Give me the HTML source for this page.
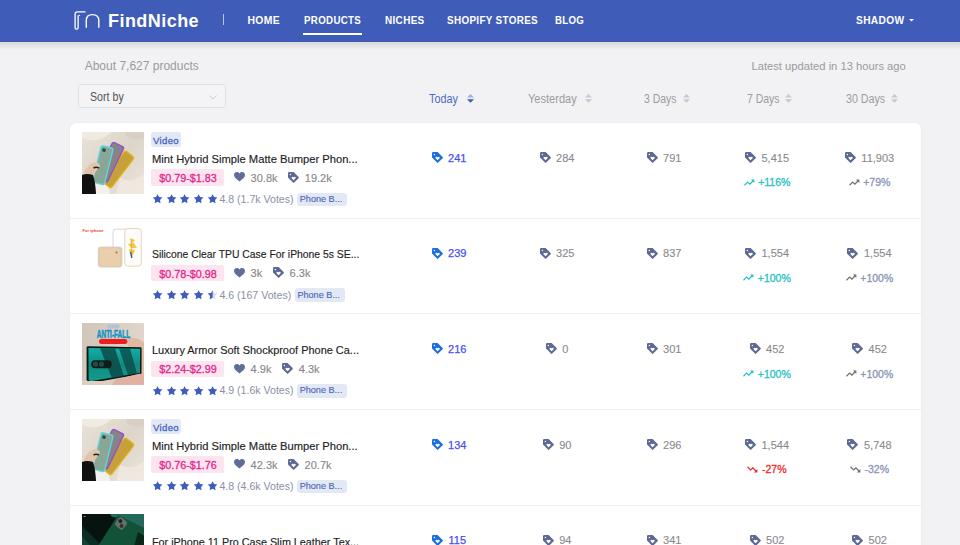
<!DOCTYPE html>
<html><head><meta charset="utf-8"><style>
html,body{margin:0;padding:0;}
body{width:960px;height:545px;overflow:hidden;background:#f2f2f4;position:relative;font-family:"Liberation Sans",sans-serif;}
.t{position:absolute;white-space:nowrap;}
.a{position:absolute;}
svg{position:absolute;overflow:visible;}
</style></head><body>
<div class="a" style="left:0;top:0;width:960px;height:42px;background:#3f5db8;"></div>
<div class="a" style="left:0;top:42px;width:960px;height:8px;background:linear-gradient(#d9d9db,#f2f2f4);"></div>
<svg style="left:74px;top:11px" width="27" height="19" viewBox="0 0 27 19">
<path d="M11.5 0.9 H3.2 Q1.1 0.9 1.1 3.1 V16.8 Q1.1 18.1 2.4 18.1 H2.8 Q4.1 18.1 4.1 16.8 V4.2" fill="none" stroke="#fff" stroke-width="1.3"/>
<circle cx="5.5" cy="4.3" r="0.65" fill="#fff"/>
<path d="M12.3 16.8 V9.5 Q12.3 3.6 18.4 3.6 Q24.8 3.6 24.8 9.5 V16.8" fill="none" stroke="#fff" stroke-width="1.4"/>
</svg>
<div class="t " style="left:108px;top:11.76px;font-size:18px;line-height:18px;color:#fff;font-weight:bold;letter-spacing:0.45px;">FindNiche</div>
<div class="a" style="left:223px;top:14px;width:1px;height:11px;background:#b9c4e6;"></div>
<div class="t " style="left:247.5px;top:15.50px;font-size:10.4px;line-height:10.4px;color:#fff;font-weight:bold;letter-spacing:0.35px;transform:scaleX(1.0);transform-origin:0 0;">HOME</div>
<div class="t " style="left:303.5px;top:15.50px;font-size:10.4px;line-height:10.4px;color:#fff;font-weight:bold;letter-spacing:0.35px;transform:scaleX(0.935);transform-origin:0 0;">PRODUCTS</div>
<div class="t " style="left:384.5px;top:15.50px;font-size:10.4px;line-height:10.4px;color:#fff;font-weight:bold;letter-spacing:0.35px;transform:scaleX(0.957);transform-origin:0 0;">NICHES</div>
<div class="t " style="left:447px;top:15.50px;font-size:10.4px;line-height:10.4px;color:#fff;font-weight:bold;letter-spacing:0.35px;transform:scaleX(0.95);transform-origin:0 0;">SHOPIFY STORES</div>
<div class="t " style="left:554.5px;top:15.50px;font-size:10.4px;line-height:10.4px;color:#fff;font-weight:bold;letter-spacing:0.35px;transform:scaleX(0.93);transform-origin:0 0;">BLOG</div>
<div class="t " style="left:856px;top:15.50px;font-size:10.4px;line-height:10.4px;color:#fff;font-weight:bold;letter-spacing:0.35px;transform:scaleX(0.98);transform-origin:0 0;">SHADOW</div>
<div class="a" style="left:303px;top:33px;width:59px;height:2px;background:#fff;"></div>
<svg style="left:909px;top:19px" width="5" height="3" viewBox="0 0 5 3"><path d="M0 0H5L2.5 2.6Z" fill="#fff"/></svg>
<div class="t " style="left:84.7px;top:60.34px;font-size:12px;line-height:12px;color:#9a9a9e;">About 7,627 products</div>
<div class="t " style="left:751.5px;top:60.72px;font-size:11.2px;line-height:11.2px;color:#9a9a9e;">Latest updated in 13 hours ago</div>
<div class="a" style="left:78px;top:84.3px;width:146px;height:22.2px;border:1px solid #dde1ea;border-radius:3px;background:#f4f4f6;"></div>
<div class="t " style="left:89.5px;top:90.84px;font-size:12px;line-height:12px;color:#555;transform:scaleX(0.887);transform-origin:0 0;">Sort by</div>
<svg style="left:208.7px;top:95.3px" width="8" height="5" viewBox="0 0 8 5"><path d="M0.5 0.5L4 4L7.5 0.5" fill="none" stroke="#c8ccd4" stroke-width="1"/></svg>
<div class="t " style="left:429px;top:92.94px;font-size:12px;line-height:12px;color:#4d6cc6;transform:scaleX(0.9);transform-origin:0 0;">Today</div>
<svg style="left:466.9px;top:94px" width="7" height="9" viewBox="0 0 7 9"><path d="M0 3.6L3.5 0L7 3.6Z" fill="#9fb2e4"/><path d="M0 5.2L3.5 8.8L7 5.2Z" fill="#3a5bc0"/></svg>
<div class="t " style="left:528px;top:92.94px;font-size:12px;line-height:12px;color:#9b9b9f;transform:scaleX(0.92);transform-origin:0 0;">Yesterday</div>
<svg style="left:585px;top:94px" width="7" height="9" viewBox="0 0 7 9"><path d="M0 3.6L3.5 0L7 3.6Z" fill="#c5c9d2"/><path d="M0 5.2L3.5 8.8L7 5.2Z" fill="#c5c9d2"/></svg>
<div class="t " style="left:644px;top:92.94px;font-size:12px;line-height:12px;color:#9b9b9f;transform:scaleX(0.868);transform-origin:0 0;">3 Days</div>
<svg style="left:683.4px;top:94px" width="7" height="9" viewBox="0 0 7 9"><path d="M0 3.6L3.5 0L7 3.6Z" fill="#c5c9d2"/><path d="M0 5.2L3.5 8.8L7 5.2Z" fill="#c5c9d2"/></svg>
<div class="t " style="left:746.6px;top:92.94px;font-size:12px;line-height:12px;color:#9b9b9f;transform:scaleX(0.87);transform-origin:0 0;">7 Days</div>
<svg style="left:785.4px;top:94px" width="7" height="9" viewBox="0 0 7 9"><path d="M0 3.6L3.5 0L7 3.6Z" fill="#c5c9d2"/><path d="M0 5.2L3.5 8.8L7 5.2Z" fill="#c5c9d2"/></svg>
<div class="t " style="left:845.7px;top:92.94px;font-size:12px;line-height:12px;color:#9b9b9f;transform:scaleX(0.89);transform-origin:0 0;">30 Days</div>
<svg style="left:891px;top:94px" width="7" height="9" viewBox="0 0 7 9"><path d="M0 3.6L3.5 0L7 3.6Z" fill="#c5c9d2"/><path d="M0 5.2L3.5 8.8L7 5.2Z" fill="#c5c9d2"/></svg>
<div class="a" style="left:70px;top:122.5px;width:851px;height:450px;background:#fff;border-radius:6px;box-shadow:0 0 2px rgba(0,0,0,0.05);"></div>
<svg style="left:81.5px;top:131.5px" width="62" height="62" viewBox="0 0 62 62">
<defs><linearGradient id="bgc131" x1="0" y1="0" x2="1" y2="1"><stop offset="0" stop-color="#e9e2d8"/><stop offset="0.5" stop-color="#ddd5c9"/><stop offset="1" stop-color="#ebe5dc"/></linearGradient></defs>
<rect width="62" height="62" fill="url(#bgc131)"/>
<path d="M0 6Q14 12 26 3L30 0H0Z" fill="#f0ebe3" opacity="0.9"/>
<path d="M38 46Q50 52 62 42V62H34Z" fill="#efe9e1" opacity="0.9"/>
<path d="M44 4Q54 10 62 6V0H44Z" fill="#d6cdc0" opacity="0.7"/>
<path d="M12 51L26 49L28 62H12Z" fill="#f4f1ec"/>
<g transform="translate(36 37.4) rotate(37.6)"><rect x="-6.5" y="-20" width="13" height="40" rx="2.5" fill="#e4b31c"/><rect x="-5.2" y="-18.7" width="10.4" height="37.4" rx="1.8" fill="#c6a13a"/></g>
<g transform="translate(28 30) rotate(26)"><rect x="-7" y="-20" width="14" height="40" rx="2.5" fill="#9153c8"/><rect x="-5.6" y="-18.6" width="11.2" height="37.2" rx="1.8" fill="#8b8289"/></g>
<g transform="translate(20.8 33.2) rotate(14)"><rect x="-6.8" y="-19.5" width="13.6" height="39" rx="2.5" fill="#5ed6de"/><rect x="-5.4" y="-18.1" width="10.8" height="36.2" rx="1.8" fill="#88a797"/><rect x="-4.2" y="-16.6" width="3.4" height="3.4" rx="1" fill="#2f4a40"/></g>
<path d="M2 40Q7 31 14 30Q18 31 18 34Q15 38 13 41L11 47Q5 48 2 45Z" fill="#e2c3ab"/>
<path d="M11.5 36Q14 34.5 17 36" stroke="#222" stroke-width="1.5" fill="none"/>
<path d="M0 43Q5 41 11 43Q13.5 50 14 62H0Z" fill="#111"/>
</svg>
<div class="a" style="left:151.3px;top:132.00px;width:30.2px;height:15.4px;background:#e3e8f5;border-radius:3px;"></div>
<div class="t " style="left:153.1px;top:136.47px;font-size:9.6px;line-height:9.6px;color:#4a67c0;letter-spacing:0.3px;-webkit-text-stroke:0.3px #4a67c0;">Video</div>
<div class="t " style="left:151.9px;top:153.82px;font-size:11.2px;line-height:11.2px;color:#222;-webkit-text-stroke:0.15px #222;">Mint Hybrid Simple Matte Bumper Phon...</div>
<div class="a" style="left:151.3px;top:169.20px;width:73px;height:16.6px;background:#fde5ef;border-radius:2px;"></div>
<div class="t " style="left:159.2px;top:172.86px;font-size:10.8px;line-height:10.8px;color:#e5268d;-webkit-text-stroke:0.3px #e5268d;">$0.79-$1.83</div>
<svg style="left:234px;top:172.4px" width="11" height="9.5" viewBox="0 0 11 9.5"><path d="M5.5 9.5C4 8.4 0 5.8 0 3.1C0 1.2 1.3 0 3 0C4.2 0 5 0.7 5.5 1.6C6 0.7 6.8 0 8 0C9.7 0 11 1.2 11 3.1C11 5.8 7 8.4 5.5 9.5Z" fill="#616d99"/></svg>
<div class="t " style="left:250.6px;top:172.69px;font-size:11px;line-height:11px;color:#86868a;-webkit-text-stroke:0.12px #86868a;">30.8k</div>
<svg style="left:288.3px;top:171.8px" width="11" height="11" viewBox="0 0 11 11"><path d="M0 1.2Q0 0 1.2 0H5.6L10.6 5Q11.2 5.6 10.6 6.2L6.2 10.6Q5.6 11.2 5 10.6L0 5.6Z" fill="#5d6994"/><circle cx="2.4" cy="2.4" r="0.75" fill="#fff"/><path d="M5.6 8.3L3.8 6.5Q3.1 5.7 3.8 5Q4.6 4.3 5.6 5.2Q6.6 4.3 7.4 5Q8.1 5.7 7.4 6.5Z" fill="#fff"/></svg>
<div class="t " style="left:304.8px;top:172.69px;font-size:11px;line-height:11px;color:#86868a;-webkit-text-stroke:0.12px #86868a;">19.2k</div>
<svg style="left:153.0px;top:194.25px" width="9.2" height="9.5" viewBox="0 0 9.2 9.5"><path d="M4.60 0.15L6.10 3.09L9.36 3.60L7.03 5.94L7.54 9.20L4.60 7.70L1.66 9.20L2.17 5.94L-0.16 3.60L3.10 3.09Z" fill="#3d5cbf"/></svg>
<svg style="left:166.65px;top:194.25px" width="9.2" height="9.5" viewBox="0 0 9.2 9.5"><path d="M4.60 0.15L6.10 3.09L9.36 3.60L7.03 5.94L7.54 9.20L4.60 7.70L1.66 9.20L2.17 5.94L-0.16 3.60L3.10 3.09Z" fill="#3d5cbf"/></svg>
<svg style="left:180.3px;top:194.25px" width="9.2" height="9.5" viewBox="0 0 9.2 9.5"><path d="M4.60 0.15L6.10 3.09L9.36 3.60L7.03 5.94L7.54 9.20L4.60 7.70L1.66 9.20L2.17 5.94L-0.16 3.60L3.10 3.09Z" fill="#3d5cbf"/></svg>
<svg style="left:193.95px;top:194.25px" width="9.2" height="9.5" viewBox="0 0 9.2 9.5"><path d="M4.60 0.15L6.10 3.09L9.36 3.60L7.03 5.94L7.54 9.20L4.60 7.70L1.66 9.20L2.17 5.94L-0.16 3.60L3.10 3.09Z" fill="#3d5cbf"/></svg>
<svg style="left:207.6px;top:194.25px" width="9.2" height="9.5" viewBox="0 0 9.2 9.5"><path d="M4.60 0.15L6.10 3.09L9.36 3.60L7.03 5.94L7.54 9.20L4.60 7.70L1.66 9.20L2.17 5.94L-0.16 3.60L3.10 3.09Z" fill="#3d5cbf"/></svg>
<div class="t " style="left:219.4px;top:193.83px;font-size:10.6px;line-height:10.6px;color:#8b90a6;">4.8 (1.7k Votes)</div>
<div class="a" style="left:297.40px;top:192.60px;width:49.6px;height:13.8px;background:#e3e8f5;border-radius:3px;"></div>
<div class="t " style="left:299.79999999999995px;top:195.10px;font-size:9.1px;line-height:9.1px;color:#4a64b8;-webkit-text-stroke:0.12px #4a64b8;">Phone B...</div>
<div class="a" style="left:389px;top:151.90px;width:120px;height:12px;display:flex;justify-content:center;align-items:flex-start;"><svg style="position:static;flex:none" width="11" height="11" viewBox="0 0 11 11"><path d="M0 1.2Q0 0 1.2 0H5.6L10.6 5Q11.2 5.6 10.6 6.2L6.2 10.6Q5.6 11.2 5 10.6L0 5.6Z" fill="#1b6fe0"/><circle cx="2.4" cy="2.4" r="0.75" fill="#fff"/><path d="M5.6 8.3L3.8 6.5Q3.1 5.7 3.8 5Q4.6 4.3 5.6 5.2Q6.6 4.3 7.4 5Q8.1 5.7 7.4 6.5Z" fill="#fff"/></svg><span style="margin-left:5.5px;font-size:11px;line-height:11px;color:#4a4ff0;position:relative;top:0.8px;-webkit-text-stroke:0.25px #4a4ff0;">241</span></div>
<div class="a" style="left:497px;top:151.90px;width:120px;height:12px;display:flex;justify-content:center;align-items:flex-start;"><svg style="position:static;flex:none" width="11" height="11" viewBox="0 0 11 11"><path d="M0 1.2Q0 0 1.2 0H5.6L10.6 5Q11.2 5.6 10.6 6.2L6.2 10.6Q5.6 11.2 5 10.6L0 5.6Z" fill="#5d6994"/><circle cx="2.4" cy="2.4" r="0.75" fill="#fff"/><path d="M5.6 8.3L3.8 6.5Q3.1 5.7 3.8 5Q4.6 4.3 5.6 5.2Q6.6 4.3 7.4 5Q8.1 5.7 7.4 6.5Z" fill="#fff"/></svg><span style="margin-left:5.5px;font-size:11px;line-height:11px;color:#8a8a8e;position:relative;top:0.8px;-webkit-text-stroke:0.12px #8a8a8e;">284</span></div>
<div class="a" style="left:604px;top:151.90px;width:120px;height:12px;display:flex;justify-content:center;align-items:flex-start;"><svg style="position:static;flex:none" width="11" height="11" viewBox="0 0 11 11"><path d="M0 1.2Q0 0 1.2 0H5.6L10.6 5Q11.2 5.6 10.6 6.2L6.2 10.6Q5.6 11.2 5 10.6L0 5.6Z" fill="#5d6994"/><circle cx="2.4" cy="2.4" r="0.75" fill="#fff"/><path d="M5.6 8.3L3.8 6.5Q3.1 5.7 3.8 5Q4.6 4.3 5.6 5.2Q6.6 4.3 7.4 5Q8.1 5.7 7.4 6.5Z" fill="#fff"/></svg><span style="margin-left:5.5px;font-size:11px;line-height:11px;color:#8a8a8e;position:relative;top:0.8px;-webkit-text-stroke:0.12px #8a8a8e;">791</span></div>
<div class="a" style="left:707px;top:151.90px;width:120px;height:12px;display:flex;justify-content:center;align-items:flex-start;"><svg style="position:static;flex:none" width="11" height="11" viewBox="0 0 11 11"><path d="M0 1.2Q0 0 1.2 0H5.6L10.6 5Q11.2 5.6 10.6 6.2L6.2 10.6Q5.6 11.2 5 10.6L0 5.6Z" fill="#5d6994"/><circle cx="2.4" cy="2.4" r="0.75" fill="#fff"/><path d="M5.6 8.3L3.8 6.5Q3.1 5.7 3.8 5Q4.6 4.3 5.6 5.2Q6.6 4.3 7.4 5Q8.1 5.7 7.4 6.5Z" fill="#fff"/></svg><span style="margin-left:5.5px;font-size:11px;line-height:11px;color:#8a8a8e;position:relative;top:0.8px;-webkit-text-stroke:0.12px #8a8a8e;">5,415</span></div>
<div class="a" style="left:809.5px;top:151.90px;width:120px;height:12px;display:flex;justify-content:center;align-items:flex-start;"><svg style="position:static;flex:none" width="11" height="11" viewBox="0 0 11 11"><path d="M0 1.2Q0 0 1.2 0H5.6L10.6 5Q11.2 5.6 10.6 6.2L6.2 10.6Q5.6 11.2 5 10.6L0 5.6Z" fill="#5d6994"/><circle cx="2.4" cy="2.4" r="0.75" fill="#fff"/><path d="M5.6 8.3L3.8 6.5Q3.1 5.7 3.8 5Q4.6 4.3 5.6 5.2Q6.6 4.3 7.4 5Q8.1 5.7 7.4 6.5Z" fill="#fff"/></svg><span style="margin-left:5.5px;font-size:11px;line-height:11px;color:#8a8a8e;position:relative;top:0.8px;-webkit-text-stroke:0.12px #8a8a8e;">11,903</span></div>
<div class="a" style="left:707px;top:178.80px;width:120px;height:8px;display:flex;justify-content:center;align-items:flex-start;"><svg style="position:static;flex:none" width="11" height="7" viewBox="0 0 11 7"><path d="M0.5 6.2L3.6 3.1L5.9 5.2L9.4 1.5" fill="none" stroke="#26c1c8" stroke-width="1.25"/><path d="M6.9 0.6H10.4V4.1Z" fill="#26c1c8"/></svg><span style="margin-left:3.5px;font-size:10.5px;line-height:10.5px;color:#26c1c8;position:relative;top:-1.5px;-webkit-text-stroke:0.3px #26c1c8;">+116%</span></div>
<div class="a" style="left:809.5px;top:178.80px;width:120px;height:8px;display:flex;justify-content:center;align-items:flex-start;"><svg style="position:static;flex:none" width="11" height="7" viewBox="0 0 11 7"><path d="M0.5 6.2L3.6 3.1L5.9 5.2L9.4 1.5" fill="none" stroke="#707070" stroke-width="1.25"/><path d="M6.9 0.6H10.4V4.1Z" fill="#707070"/></svg><span style="margin-left:3.5px;font-size:10.5px;line-height:10.5px;color:#8a94b8;position:relative;top:-1.5px;-webkit-text-stroke:0.3px #8a94b8;">+79%</span></div>
<div class="a" style="left:70px;top:217.50px;width:851px;height:1px;background:#eef0f5;"></div>
<svg style="left:81.5px;top:227.17000000000002px" width="62" height="62" viewBox="0 0 62 62">
<rect width="62" height="62" fill="#fff"/>
<text x="0.5" y="5" font-size="4.2" font-weight="bold" fill="#f23a2a" font-family="Liberation Sans" textLength="21" lengthAdjust="spacingAndGlyphs">For iphone</text>
<path d="M31 39.5V5Q31 2.2 34 2.2H45" fill="none" stroke="#d4d4d8" stroke-width="0.9"/>
<rect x="42.8" y="1.5" width="16.5" height="37.7" rx="3" fill="#fdfbf7" stroke="#e2d2b8" stroke-width="0.9"/>
<path d="M48 11L53 13L50 17Z M46 17L52 16L55 21L49 21Z M47 22L53 23L51 28L48 27Z" fill="#f1c232" opacity="0.9"/>
<path d="M49 12L50 30" stroke="#e0a820" stroke-width="0.8"/>
<path d="M48.6 25L49.8 31" stroke="#3456a8" stroke-width="1.3"/>
<rect x="16.2" y="19.9" width="23.8" height="20.2" rx="2.5" fill="#e6c9a4" stroke="#cfcfd2" stroke-width="0.8"/>
<rect x="18" y="21.5" width="20" height="17" rx="1.5" fill="#eacfad"/>
<circle cx="34.5" cy="25.4" r="1" fill="#8a7560"/>
</svg>
<div class="t " style="left:151.9px;top:249.49px;font-size:11.2px;line-height:11.2px;color:#222;transform:scaleX(0.927);transform-origin:0 0;-webkit-text-stroke:0.15px #222;">Silicone Clear TPU Case For iPhone 5s SE...</div>
<div class="a" style="left:151.3px;top:264.87px;width:73px;height:16.6px;background:#fde5ef;border-radius:2px;"></div>
<div class="t " style="left:159.2px;top:268.53px;font-size:10.8px;line-height:10.8px;color:#e5268d;-webkit-text-stroke:0.3px #e5268d;">$0.78-$0.98</div>
<svg style="left:234px;top:268.07px" width="11" height="9.5" viewBox="0 0 11 9.5"><path d="M5.5 9.5C4 8.4 0 5.8 0 3.1C0 1.2 1.3 0 3 0C4.2 0 5 0.7 5.5 1.6C6 0.7 6.8 0 8 0C9.7 0 11 1.2 11 3.1C11 5.8 7 8.4 5.5 9.5Z" fill="#616d99"/></svg>
<div class="t " style="left:250.6px;top:268.36px;font-size:11px;line-height:11px;color:#86868a;-webkit-text-stroke:0.12px #86868a;">3k</div>
<svg style="left:273.1px;top:267.47px" width="11" height="11" viewBox="0 0 11 11"><path d="M0 1.2Q0 0 1.2 0H5.6L10.6 5Q11.2 5.6 10.6 6.2L6.2 10.6Q5.6 11.2 5 10.6L0 5.6Z" fill="#5d6994"/><circle cx="2.4" cy="2.4" r="0.75" fill="#fff"/><path d="M5.6 8.3L3.8 6.5Q3.1 5.7 3.8 5Q4.6 4.3 5.6 5.2Q6.6 4.3 7.4 5Q8.1 5.7 7.4 6.5Z" fill="#fff"/></svg>
<div class="t " style="left:289.6px;top:268.36px;font-size:11px;line-height:11px;color:#86868a;-webkit-text-stroke:0.12px #86868a;">6.3k</div>
<svg style="left:153.0px;top:289.92px" width="9.2" height="9.5" viewBox="0 0 9.2 9.5"><path d="M4.60 0.15L6.10 3.09L9.36 3.60L7.03 5.94L7.54 9.20L4.60 7.70L1.66 9.20L2.17 5.94L-0.16 3.60L3.10 3.09Z" fill="#3d5cbf"/></svg>
<svg style="left:166.65px;top:289.92px" width="9.2" height="9.5" viewBox="0 0 9.2 9.5"><path d="M4.60 0.15L6.10 3.09L9.36 3.60L7.03 5.94L7.54 9.20L4.60 7.70L1.66 9.20L2.17 5.94L-0.16 3.60L3.10 3.09Z" fill="#3d5cbf"/></svg>
<svg style="left:180.3px;top:289.92px" width="9.2" height="9.5" viewBox="0 0 9.2 9.5"><path d="M4.60 0.15L6.10 3.09L9.36 3.60L7.03 5.94L7.54 9.20L4.60 7.70L1.66 9.20L2.17 5.94L-0.16 3.60L3.10 3.09Z" fill="#3d5cbf"/></svg>
<svg style="left:193.95px;top:289.92px" width="9.2" height="9.5" viewBox="0 0 9.2 9.5"><path d="M4.60 0.15L6.10 3.09L9.36 3.60L7.03 5.94L7.54 9.20L4.60 7.70L1.66 9.20L2.17 5.94L-0.16 3.60L3.10 3.09Z" fill="#3d5cbf"/></svg>
<svg style="left:207.6px;top:289.92px" width="9.2" height="9.5" viewBox="0 0 9.2 9.5"><path d="M4.60 0.15L6.10 3.09L9.36 3.60L7.03 5.94L7.54 9.20L4.60 7.70L1.66 9.20L2.17 5.94L-0.16 3.60L3.10 3.09Z" fill="#d8ddee"/><path d="M4.60 0.15L4.60 7.70L1.66 9.20L2.17 5.94L-0.16 3.60L3.10 3.09Z" fill="#3d5cbf"/></svg>
<div class="t " style="left:219.4px;top:289.50px;font-size:10.6px;line-height:10.6px;color:#8b90a6;">4.6 (167 Votes)</div>
<div class="a" style="left:295.00px;top:288.27px;width:49.6px;height:13.8px;background:#e3e8f5;border-radius:3px;"></div>
<div class="t " style="left:297.4px;top:290.77px;font-size:9.1px;line-height:9.1px;color:#4a64b8;-webkit-text-stroke:0.12px #4a64b8;">Phone B...</div>
<div class="a" style="left:389px;top:247.57px;width:120px;height:12px;display:flex;justify-content:center;align-items:flex-start;"><svg style="position:static;flex:none" width="11" height="11" viewBox="0 0 11 11"><path d="M0 1.2Q0 0 1.2 0H5.6L10.6 5Q11.2 5.6 10.6 6.2L6.2 10.6Q5.6 11.2 5 10.6L0 5.6Z" fill="#1b6fe0"/><circle cx="2.4" cy="2.4" r="0.75" fill="#fff"/><path d="M5.6 8.3L3.8 6.5Q3.1 5.7 3.8 5Q4.6 4.3 5.6 5.2Q6.6 4.3 7.4 5Q8.1 5.7 7.4 6.5Z" fill="#fff"/></svg><span style="margin-left:5.5px;font-size:11px;line-height:11px;color:#4a4ff0;position:relative;top:0.8px;-webkit-text-stroke:0.25px #4a4ff0;">239</span></div>
<div class="a" style="left:497px;top:247.57px;width:120px;height:12px;display:flex;justify-content:center;align-items:flex-start;"><svg style="position:static;flex:none" width="11" height="11" viewBox="0 0 11 11"><path d="M0 1.2Q0 0 1.2 0H5.6L10.6 5Q11.2 5.6 10.6 6.2L6.2 10.6Q5.6 11.2 5 10.6L0 5.6Z" fill="#5d6994"/><circle cx="2.4" cy="2.4" r="0.75" fill="#fff"/><path d="M5.6 8.3L3.8 6.5Q3.1 5.7 3.8 5Q4.6 4.3 5.6 5.2Q6.6 4.3 7.4 5Q8.1 5.7 7.4 6.5Z" fill="#fff"/></svg><span style="margin-left:5.5px;font-size:11px;line-height:11px;color:#8a8a8e;position:relative;top:0.8px;-webkit-text-stroke:0.12px #8a8a8e;">325</span></div>
<div class="a" style="left:604px;top:247.57px;width:120px;height:12px;display:flex;justify-content:center;align-items:flex-start;"><svg style="position:static;flex:none" width="11" height="11" viewBox="0 0 11 11"><path d="M0 1.2Q0 0 1.2 0H5.6L10.6 5Q11.2 5.6 10.6 6.2L6.2 10.6Q5.6 11.2 5 10.6L0 5.6Z" fill="#5d6994"/><circle cx="2.4" cy="2.4" r="0.75" fill="#fff"/><path d="M5.6 8.3L3.8 6.5Q3.1 5.7 3.8 5Q4.6 4.3 5.6 5.2Q6.6 4.3 7.4 5Q8.1 5.7 7.4 6.5Z" fill="#fff"/></svg><span style="margin-left:5.5px;font-size:11px;line-height:11px;color:#8a8a8e;position:relative;top:0.8px;-webkit-text-stroke:0.12px #8a8a8e;">837</span></div>
<div class="a" style="left:707px;top:247.57px;width:120px;height:12px;display:flex;justify-content:center;align-items:flex-start;"><svg style="position:static;flex:none" width="11" height="11" viewBox="0 0 11 11"><path d="M0 1.2Q0 0 1.2 0H5.6L10.6 5Q11.2 5.6 10.6 6.2L6.2 10.6Q5.6 11.2 5 10.6L0 5.6Z" fill="#5d6994"/><circle cx="2.4" cy="2.4" r="0.75" fill="#fff"/><path d="M5.6 8.3L3.8 6.5Q3.1 5.7 3.8 5Q4.6 4.3 5.6 5.2Q6.6 4.3 7.4 5Q8.1 5.7 7.4 6.5Z" fill="#fff"/></svg><span style="margin-left:5.5px;font-size:11px;line-height:11px;color:#8a8a8e;position:relative;top:0.8px;-webkit-text-stroke:0.12px #8a8a8e;">1,554</span></div>
<div class="a" style="left:809.5px;top:247.57px;width:120px;height:12px;display:flex;justify-content:center;align-items:flex-start;"><svg style="position:static;flex:none" width="11" height="11" viewBox="0 0 11 11"><path d="M0 1.2Q0 0 1.2 0H5.6L10.6 5Q11.2 5.6 10.6 6.2L6.2 10.6Q5.6 11.2 5 10.6L0 5.6Z" fill="#5d6994"/><circle cx="2.4" cy="2.4" r="0.75" fill="#fff"/><path d="M5.6 8.3L3.8 6.5Q3.1 5.7 3.8 5Q4.6 4.3 5.6 5.2Q6.6 4.3 7.4 5Q8.1 5.7 7.4 6.5Z" fill="#fff"/></svg><span style="margin-left:5.5px;font-size:11px;line-height:11px;color:#8a8a8e;position:relative;top:0.8px;-webkit-text-stroke:0.12px #8a8a8e;">1,554</span></div>
<div class="a" style="left:707px;top:274.47px;width:120px;height:8px;display:flex;justify-content:center;align-items:flex-start;"><svg style="position:static;flex:none" width="11" height="7" viewBox="0 0 11 7"><path d="M0.5 6.2L3.6 3.1L5.9 5.2L9.4 1.5" fill="none" stroke="#26c1c8" stroke-width="1.25"/><path d="M6.9 0.6H10.4V4.1Z" fill="#26c1c8"/></svg><span style="margin-left:3.5px;font-size:10.5px;line-height:10.5px;color:#26c1c8;position:relative;top:-1.5px;-webkit-text-stroke:0.3px #26c1c8;">+100%</span></div>
<div class="a" style="left:809.5px;top:274.47px;width:120px;height:8px;display:flex;justify-content:center;align-items:flex-start;"><svg style="position:static;flex:none" width="11" height="7" viewBox="0 0 11 7"><path d="M0.5 6.2L3.6 3.1L5.9 5.2L9.4 1.5" fill="none" stroke="#707070" stroke-width="1.25"/><path d="M6.9 0.6H10.4V4.1Z" fill="#707070"/></svg><span style="margin-left:3.5px;font-size:10.5px;line-height:10.5px;color:#8a94b8;position:relative;top:-1.5px;-webkit-text-stroke:0.3px #8a94b8;">+100%</span></div>
<div class="a" style="left:70px;top:313.17px;width:851px;height:1px;background:#eef0f5;"></div>
<svg style="left:81.5px;top:322.84000000000003px" width="62" height="62" viewBox="0 0 62 62">
<defs><linearGradient id="abg" x1="0" y1="0" x2="1" y2="0"><stop offset="0" stop-color="#d2c5b9"/><stop offset="1" stop-color="#e0d6cc"/></linearGradient>
<linearGradient id="phg" x1="0" y1="0" x2="0" y2="1"><stop offset="0" stop-color="#10b0a8"/><stop offset="0.5" stop-color="#118a80"/><stop offset="1" stop-color="#139c8e"/></linearGradient></defs>
<rect width="62" height="62" fill="url(#abg)"/>
<path d="M44 16Q56 13 62 20V62H56Z" fill="#dfb9a2"/>
<rect x="25" y="1.5" width="12.4" height="4" rx="1.5" fill="#b9c0cf"/>
<text x="14.8" y="14.8" font-size="10.6" font-weight="bold" fill="#1492c2" stroke="#1492c2" stroke-width="0.5" font-family="Liberation Sans" textLength="33.4" lengthAdjust="spacingAndGlyphs">ANTI-FALL</text>
<rect x="17" y="16" width="28.3" height="5" rx="2.5" fill="#ef1d1d"/>
<path d="M4.6 24.5Q4.6 23.2 6 23.2L58.5 24.2Q59.6 24.3 59.6 25.5L59.5 50Q59.5 51 58.5 51.2L8.5 60Q6.6 60.3 6.2 58.5L4.6 57Z" fill="#0d1414"/>
<path d="M6.4 25L58.2 25.8L58 49.8L8.3 58.3L6.6 56.8Z" fill="url(#phg)"/>
<path d="M18 25.3L33 25.4L42 53.2L30 55.2Z" fill="#0a4644" opacity="0.8"/>
<path d="M37 25.5L48 25.6L55 50.5L46 52Z" fill="#0a4644" opacity="0.75"/>
<rect x="9.2" y="37.3" width="20.5" height="7.9" rx="3.9" fill="#0e1c1b"/>
<circle cx="13.5" cy="41.2" r="2.6" fill="#1f4a46"/><circle cx="19.5" cy="41.2" r="2.6" fill="#1f4a46"/>
<path d="M30 62Q32 56 38 55.5L56 51Q62 50 62 56V62Z" fill="#e0b0a2"/>
<rect x="0" y="58" width="30" height="4" fill="#dccfc2"/>
</svg>
<div class="t " style="left:151.9px;top:345.16px;font-size:11.2px;line-height:11.2px;color:#222;transform:scaleX(0.979);transform-origin:0 0;-webkit-text-stroke:0.15px #222;">Luxury Armor Soft Shockproof Phone Ca...</div>
<div class="a" style="left:151.3px;top:360.54px;width:73px;height:16.6px;background:#fde5ef;border-radius:2px;"></div>
<div class="t " style="left:159.2px;top:364.20px;font-size:10.8px;line-height:10.8px;color:#e5268d;-webkit-text-stroke:0.3px #e5268d;">$2.24-$2.99</div>
<svg style="left:234px;top:363.74px" width="11" height="9.5" viewBox="0 0 11 9.5"><path d="M5.5 9.5C4 8.4 0 5.8 0 3.1C0 1.2 1.3 0 3 0C4.2 0 5 0.7 5.5 1.6C6 0.7 6.8 0 8 0C9.7 0 11 1.2 11 3.1C11 5.8 7 8.4 5.5 9.5Z" fill="#616d99"/></svg>
<div class="t " style="left:250.6px;top:364.03px;font-size:11px;line-height:11px;color:#86868a;-webkit-text-stroke:0.12px #86868a;">4.9k</div>
<svg style="left:282.3px;top:363.14px" width="11" height="11" viewBox="0 0 11 11"><path d="M0 1.2Q0 0 1.2 0H5.6L10.6 5Q11.2 5.6 10.6 6.2L6.2 10.6Q5.6 11.2 5 10.6L0 5.6Z" fill="#5d6994"/><circle cx="2.4" cy="2.4" r="0.75" fill="#fff"/><path d="M5.6 8.3L3.8 6.5Q3.1 5.7 3.8 5Q4.6 4.3 5.6 5.2Q6.6 4.3 7.4 5Q8.1 5.7 7.4 6.5Z" fill="#fff"/></svg>
<div class="t " style="left:298.8px;top:364.03px;font-size:11px;line-height:11px;color:#86868a;-webkit-text-stroke:0.12px #86868a;">4.3k</div>
<svg style="left:153.0px;top:385.59000000000003px" width="9.2" height="9.5" viewBox="0 0 9.2 9.5"><path d="M4.60 0.15L6.10 3.09L9.36 3.60L7.03 5.94L7.54 9.20L4.60 7.70L1.66 9.20L2.17 5.94L-0.16 3.60L3.10 3.09Z" fill="#3d5cbf"/></svg>
<svg style="left:166.65px;top:385.59000000000003px" width="9.2" height="9.5" viewBox="0 0 9.2 9.5"><path d="M4.60 0.15L6.10 3.09L9.36 3.60L7.03 5.94L7.54 9.20L4.60 7.70L1.66 9.20L2.17 5.94L-0.16 3.60L3.10 3.09Z" fill="#3d5cbf"/></svg>
<svg style="left:180.3px;top:385.59000000000003px" width="9.2" height="9.5" viewBox="0 0 9.2 9.5"><path d="M4.60 0.15L6.10 3.09L9.36 3.60L7.03 5.94L7.54 9.20L4.60 7.70L1.66 9.20L2.17 5.94L-0.16 3.60L3.10 3.09Z" fill="#3d5cbf"/></svg>
<svg style="left:193.95px;top:385.59000000000003px" width="9.2" height="9.5" viewBox="0 0 9.2 9.5"><path d="M4.60 0.15L6.10 3.09L9.36 3.60L7.03 5.94L7.54 9.20L4.60 7.70L1.66 9.20L2.17 5.94L-0.16 3.60L3.10 3.09Z" fill="#3d5cbf"/></svg>
<svg style="left:207.6px;top:385.59000000000003px" width="9.2" height="9.5" viewBox="0 0 9.2 9.5"><path d="M4.60 0.15L6.10 3.09L9.36 3.60L7.03 5.94L7.54 9.20L4.60 7.70L1.66 9.20L2.17 5.94L-0.16 3.60L3.10 3.09Z" fill="#3d5cbf"/></svg>
<div class="t " style="left:219.4px;top:385.17px;font-size:10.6px;line-height:10.6px;color:#8b90a6;">4.9 (1.6k Votes)</div>
<div class="a" style="left:297.30px;top:383.94px;width:49.6px;height:13.8px;background:#e3e8f5;border-radius:3px;"></div>
<div class="t " style="left:299.7px;top:386.44px;font-size:9.1px;line-height:9.1px;color:#4a64b8;-webkit-text-stroke:0.12px #4a64b8;">Phone B...</div>
<div class="a" style="left:389px;top:343.24px;width:120px;height:12px;display:flex;justify-content:center;align-items:flex-start;"><svg style="position:static;flex:none" width="11" height="11" viewBox="0 0 11 11"><path d="M0 1.2Q0 0 1.2 0H5.6L10.6 5Q11.2 5.6 10.6 6.2L6.2 10.6Q5.6 11.2 5 10.6L0 5.6Z" fill="#1b6fe0"/><circle cx="2.4" cy="2.4" r="0.75" fill="#fff"/><path d="M5.6 8.3L3.8 6.5Q3.1 5.7 3.8 5Q4.6 4.3 5.6 5.2Q6.6 4.3 7.4 5Q8.1 5.7 7.4 6.5Z" fill="#fff"/></svg><span style="margin-left:5.5px;font-size:11px;line-height:11px;color:#4a4ff0;position:relative;top:0.8px;-webkit-text-stroke:0.25px #4a4ff0;">216</span></div>
<div class="a" style="left:497px;top:343.24px;width:120px;height:12px;display:flex;justify-content:center;align-items:flex-start;"><svg style="position:static;flex:none" width="11" height="11" viewBox="0 0 11 11"><path d="M0 1.2Q0 0 1.2 0H5.6L10.6 5Q11.2 5.6 10.6 6.2L6.2 10.6Q5.6 11.2 5 10.6L0 5.6Z" fill="#5d6994"/><circle cx="2.4" cy="2.4" r="0.75" fill="#fff"/><path d="M5.6 8.3L3.8 6.5Q3.1 5.7 3.8 5Q4.6 4.3 5.6 5.2Q6.6 4.3 7.4 5Q8.1 5.7 7.4 6.5Z" fill="#fff"/></svg><span style="margin-left:5.5px;font-size:11px;line-height:11px;color:#8a8a8e;position:relative;top:0.8px;-webkit-text-stroke:0.12px #8a8a8e;">0</span></div>
<div class="a" style="left:604px;top:343.24px;width:120px;height:12px;display:flex;justify-content:center;align-items:flex-start;"><svg style="position:static;flex:none" width="11" height="11" viewBox="0 0 11 11"><path d="M0 1.2Q0 0 1.2 0H5.6L10.6 5Q11.2 5.6 10.6 6.2L6.2 10.6Q5.6 11.2 5 10.6L0 5.6Z" fill="#5d6994"/><circle cx="2.4" cy="2.4" r="0.75" fill="#fff"/><path d="M5.6 8.3L3.8 6.5Q3.1 5.7 3.8 5Q4.6 4.3 5.6 5.2Q6.6 4.3 7.4 5Q8.1 5.7 7.4 6.5Z" fill="#fff"/></svg><span style="margin-left:5.5px;font-size:11px;line-height:11px;color:#8a8a8e;position:relative;top:0.8px;-webkit-text-stroke:0.12px #8a8a8e;">301</span></div>
<div class="a" style="left:707px;top:343.24px;width:120px;height:12px;display:flex;justify-content:center;align-items:flex-start;"><svg style="position:static;flex:none" width="11" height="11" viewBox="0 0 11 11"><path d="M0 1.2Q0 0 1.2 0H5.6L10.6 5Q11.2 5.6 10.6 6.2L6.2 10.6Q5.6 11.2 5 10.6L0 5.6Z" fill="#5d6994"/><circle cx="2.4" cy="2.4" r="0.75" fill="#fff"/><path d="M5.6 8.3L3.8 6.5Q3.1 5.7 3.8 5Q4.6 4.3 5.6 5.2Q6.6 4.3 7.4 5Q8.1 5.7 7.4 6.5Z" fill="#fff"/></svg><span style="margin-left:5.5px;font-size:11px;line-height:11px;color:#8a8a8e;position:relative;top:0.8px;-webkit-text-stroke:0.12px #8a8a8e;">452</span></div>
<div class="a" style="left:809.5px;top:343.24px;width:120px;height:12px;display:flex;justify-content:center;align-items:flex-start;"><svg style="position:static;flex:none" width="11" height="11" viewBox="0 0 11 11"><path d="M0 1.2Q0 0 1.2 0H5.6L10.6 5Q11.2 5.6 10.6 6.2L6.2 10.6Q5.6 11.2 5 10.6L0 5.6Z" fill="#5d6994"/><circle cx="2.4" cy="2.4" r="0.75" fill="#fff"/><path d="M5.6 8.3L3.8 6.5Q3.1 5.7 3.8 5Q4.6 4.3 5.6 5.2Q6.6 4.3 7.4 5Q8.1 5.7 7.4 6.5Z" fill="#fff"/></svg><span style="margin-left:5.5px;font-size:11px;line-height:11px;color:#8a8a8e;position:relative;top:0.8px;-webkit-text-stroke:0.12px #8a8a8e;">452</span></div>
<div class="a" style="left:707px;top:370.14px;width:120px;height:8px;display:flex;justify-content:center;align-items:flex-start;"><svg style="position:static;flex:none" width="11" height="7" viewBox="0 0 11 7"><path d="M0.5 6.2L3.6 3.1L5.9 5.2L9.4 1.5" fill="none" stroke="#26c1c8" stroke-width="1.25"/><path d="M6.9 0.6H10.4V4.1Z" fill="#26c1c8"/></svg><span style="margin-left:3.5px;font-size:10.5px;line-height:10.5px;color:#26c1c8;position:relative;top:-1.5px;-webkit-text-stroke:0.3px #26c1c8;">+100%</span></div>
<div class="a" style="left:809.5px;top:370.14px;width:120px;height:8px;display:flex;justify-content:center;align-items:flex-start;"><svg style="position:static;flex:none" width="11" height="7" viewBox="0 0 11 7"><path d="M0.5 6.2L3.6 3.1L5.9 5.2L9.4 1.5" fill="none" stroke="#707070" stroke-width="1.25"/><path d="M6.9 0.6H10.4V4.1Z" fill="#707070"/></svg><span style="margin-left:3.5px;font-size:10.5px;line-height:10.5px;color:#8a94b8;position:relative;top:-1.5px;-webkit-text-stroke:0.3px #8a94b8;">+100%</span></div>
<div class="a" style="left:70px;top:408.84px;width:851px;height:1px;background:#eef0f5;"></div>
<svg style="left:81.5px;top:418.51px" width="62" height="62" viewBox="0 0 62 62">
<defs><linearGradient id="bgc418" x1="0" y1="0" x2="1" y2="1"><stop offset="0" stop-color="#e9e2d8"/><stop offset="0.5" stop-color="#ddd5c9"/><stop offset="1" stop-color="#ebe5dc"/></linearGradient></defs>
<rect width="62" height="62" fill="url(#bgc418)"/>
<path d="M0 6Q14 12 26 3L30 0H0Z" fill="#f0ebe3" opacity="0.9"/>
<path d="M38 46Q50 52 62 42V62H34Z" fill="#efe9e1" opacity="0.9"/>
<path d="M44 4Q54 10 62 6V0H44Z" fill="#d6cdc0" opacity="0.7"/>
<path d="M12 51L26 49L28 62H12Z" fill="#f4f1ec"/>
<g transform="translate(36 37.4) rotate(37.6)"><rect x="-6.5" y="-20" width="13" height="40" rx="2.5" fill="#e4b31c"/><rect x="-5.2" y="-18.7" width="10.4" height="37.4" rx="1.8" fill="#c6a13a"/></g>
<g transform="translate(28 30) rotate(26)"><rect x="-7" y="-20" width="14" height="40" rx="2.5" fill="#9153c8"/><rect x="-5.6" y="-18.6" width="11.2" height="37.2" rx="1.8" fill="#8b8289"/></g>
<g transform="translate(20.8 33.2) rotate(14)"><rect x="-6.8" y="-19.5" width="13.6" height="39" rx="2.5" fill="#5ed6de"/><rect x="-5.4" y="-18.1" width="10.8" height="36.2" rx="1.8" fill="#88a797"/><rect x="-4.2" y="-16.6" width="3.4" height="3.4" rx="1" fill="#2f4a40"/></g>
<path d="M2 40Q7 31 14 30Q18 31 18 34Q15 38 13 41L11 47Q5 48 2 45Z" fill="#e2c3ab"/>
<path d="M11.5 36Q14 34.5 17 36" stroke="#222" stroke-width="1.5" fill="none"/>
<path d="M0 43Q5 41 11 43Q13.5 50 14 62H0Z" fill="#111"/>
</svg>
<div class="a" style="left:151.3px;top:419.01px;width:30.2px;height:15.4px;background:#e3e8f5;border-radius:3px;"></div>
<div class="t " style="left:153.1px;top:423.48px;font-size:9.6px;line-height:9.6px;color:#4a67c0;letter-spacing:0.3px;-webkit-text-stroke:0.3px #4a67c0;">Video</div>
<div class="t " style="left:151.9px;top:440.83px;font-size:11.2px;line-height:11.2px;color:#222;-webkit-text-stroke:0.15px #222;">Mint Hybrid Simple Matte Bumper Phon...</div>
<div class="a" style="left:151.3px;top:456.21px;width:73px;height:16.6px;background:#fde5ef;border-radius:2px;"></div>
<div class="t " style="left:159.2px;top:459.87px;font-size:10.8px;line-height:10.8px;color:#e5268d;-webkit-text-stroke:0.3px #e5268d;">$0.76-$1.76</div>
<svg style="left:234px;top:459.40999999999997px" width="11" height="9.5" viewBox="0 0 11 9.5"><path d="M5.5 9.5C4 8.4 0 5.8 0 3.1C0 1.2 1.3 0 3 0C4.2 0 5 0.7 5.5 1.6C6 0.7 6.8 0 8 0C9.7 0 11 1.2 11 3.1C11 5.8 7 8.4 5.5 9.5Z" fill="#616d99"/></svg>
<div class="t " style="left:250.6px;top:459.70px;font-size:11px;line-height:11px;color:#86868a;-webkit-text-stroke:0.12px #86868a;">42.3k</div>
<svg style="left:288.1px;top:458.81px" width="11" height="11" viewBox="0 0 11 11"><path d="M0 1.2Q0 0 1.2 0H5.6L10.6 5Q11.2 5.6 10.6 6.2L6.2 10.6Q5.6 11.2 5 10.6L0 5.6Z" fill="#5d6994"/><circle cx="2.4" cy="2.4" r="0.75" fill="#fff"/><path d="M5.6 8.3L3.8 6.5Q3.1 5.7 3.8 5Q4.6 4.3 5.6 5.2Q6.6 4.3 7.4 5Q8.1 5.7 7.4 6.5Z" fill="#fff"/></svg>
<div class="t " style="left:304.6px;top:459.70px;font-size:11px;line-height:11px;color:#86868a;-webkit-text-stroke:0.12px #86868a;">20.7k</div>
<svg style="left:153.0px;top:481.26px" width="9.2" height="9.5" viewBox="0 0 9.2 9.5"><path d="M4.60 0.15L6.10 3.09L9.36 3.60L7.03 5.94L7.54 9.20L4.60 7.70L1.66 9.20L2.17 5.94L-0.16 3.60L3.10 3.09Z" fill="#3d5cbf"/></svg>
<svg style="left:166.65px;top:481.26px" width="9.2" height="9.5" viewBox="0 0 9.2 9.5"><path d="M4.60 0.15L6.10 3.09L9.36 3.60L7.03 5.94L7.54 9.20L4.60 7.70L1.66 9.20L2.17 5.94L-0.16 3.60L3.10 3.09Z" fill="#3d5cbf"/></svg>
<svg style="left:180.3px;top:481.26px" width="9.2" height="9.5" viewBox="0 0 9.2 9.5"><path d="M4.60 0.15L6.10 3.09L9.36 3.60L7.03 5.94L7.54 9.20L4.60 7.70L1.66 9.20L2.17 5.94L-0.16 3.60L3.10 3.09Z" fill="#3d5cbf"/></svg>
<svg style="left:193.95px;top:481.26px" width="9.2" height="9.5" viewBox="0 0 9.2 9.5"><path d="M4.60 0.15L6.10 3.09L9.36 3.60L7.03 5.94L7.54 9.20L4.60 7.70L1.66 9.20L2.17 5.94L-0.16 3.60L3.10 3.09Z" fill="#3d5cbf"/></svg>
<svg style="left:207.6px;top:481.26px" width="9.2" height="9.5" viewBox="0 0 9.2 9.5"><path d="M4.60 0.15L6.10 3.09L9.36 3.60L7.03 5.94L7.54 9.20L4.60 7.70L1.66 9.20L2.17 5.94L-0.16 3.60L3.10 3.09Z" fill="#3d5cbf"/></svg>
<div class="t " style="left:219.4px;top:480.84px;font-size:10.6px;line-height:10.6px;color:#8b90a6;">4.8 (4.6k Votes)</div>
<div class="a" style="left:297.30px;top:479.61px;width:49.6px;height:13.8px;background:#e3e8f5;border-radius:3px;"></div>
<div class="t " style="left:299.7px;top:482.11px;font-size:9.1px;line-height:9.1px;color:#4a64b8;-webkit-text-stroke:0.12px #4a64b8;">Phone B...</div>
<div class="a" style="left:389px;top:438.91px;width:120px;height:12px;display:flex;justify-content:center;align-items:flex-start;"><svg style="position:static;flex:none" width="11" height="11" viewBox="0 0 11 11"><path d="M0 1.2Q0 0 1.2 0H5.6L10.6 5Q11.2 5.6 10.6 6.2L6.2 10.6Q5.6 11.2 5 10.6L0 5.6Z" fill="#1b6fe0"/><circle cx="2.4" cy="2.4" r="0.75" fill="#fff"/><path d="M5.6 8.3L3.8 6.5Q3.1 5.7 3.8 5Q4.6 4.3 5.6 5.2Q6.6 4.3 7.4 5Q8.1 5.7 7.4 6.5Z" fill="#fff"/></svg><span style="margin-left:5.5px;font-size:11px;line-height:11px;color:#4a4ff0;position:relative;top:0.8px;-webkit-text-stroke:0.25px #4a4ff0;">134</span></div>
<div class="a" style="left:497px;top:438.91px;width:120px;height:12px;display:flex;justify-content:center;align-items:flex-start;"><svg style="position:static;flex:none" width="11" height="11" viewBox="0 0 11 11"><path d="M0 1.2Q0 0 1.2 0H5.6L10.6 5Q11.2 5.6 10.6 6.2L6.2 10.6Q5.6 11.2 5 10.6L0 5.6Z" fill="#5d6994"/><circle cx="2.4" cy="2.4" r="0.75" fill="#fff"/><path d="M5.6 8.3L3.8 6.5Q3.1 5.7 3.8 5Q4.6 4.3 5.6 5.2Q6.6 4.3 7.4 5Q8.1 5.7 7.4 6.5Z" fill="#fff"/></svg><span style="margin-left:5.5px;font-size:11px;line-height:11px;color:#8a8a8e;position:relative;top:0.8px;-webkit-text-stroke:0.12px #8a8a8e;">90</span></div>
<div class="a" style="left:604px;top:438.91px;width:120px;height:12px;display:flex;justify-content:center;align-items:flex-start;"><svg style="position:static;flex:none" width="11" height="11" viewBox="0 0 11 11"><path d="M0 1.2Q0 0 1.2 0H5.6L10.6 5Q11.2 5.6 10.6 6.2L6.2 10.6Q5.6 11.2 5 10.6L0 5.6Z" fill="#5d6994"/><circle cx="2.4" cy="2.4" r="0.75" fill="#fff"/><path d="M5.6 8.3L3.8 6.5Q3.1 5.7 3.8 5Q4.6 4.3 5.6 5.2Q6.6 4.3 7.4 5Q8.1 5.7 7.4 6.5Z" fill="#fff"/></svg><span style="margin-left:5.5px;font-size:11px;line-height:11px;color:#8a8a8e;position:relative;top:0.8px;-webkit-text-stroke:0.12px #8a8a8e;">296</span></div>
<div class="a" style="left:707px;top:438.91px;width:120px;height:12px;display:flex;justify-content:center;align-items:flex-start;"><svg style="position:static;flex:none" width="11" height="11" viewBox="0 0 11 11"><path d="M0 1.2Q0 0 1.2 0H5.6L10.6 5Q11.2 5.6 10.6 6.2L6.2 10.6Q5.6 11.2 5 10.6L0 5.6Z" fill="#5d6994"/><circle cx="2.4" cy="2.4" r="0.75" fill="#fff"/><path d="M5.6 8.3L3.8 6.5Q3.1 5.7 3.8 5Q4.6 4.3 5.6 5.2Q6.6 4.3 7.4 5Q8.1 5.7 7.4 6.5Z" fill="#fff"/></svg><span style="margin-left:5.5px;font-size:11px;line-height:11px;color:#8a8a8e;position:relative;top:0.8px;-webkit-text-stroke:0.12px #8a8a8e;">1,544</span></div>
<div class="a" style="left:809.5px;top:438.91px;width:120px;height:12px;display:flex;justify-content:center;align-items:flex-start;"><svg style="position:static;flex:none" width="11" height="11" viewBox="0 0 11 11"><path d="M0 1.2Q0 0 1.2 0H5.6L10.6 5Q11.2 5.6 10.6 6.2L6.2 10.6Q5.6 11.2 5 10.6L0 5.6Z" fill="#5d6994"/><circle cx="2.4" cy="2.4" r="0.75" fill="#fff"/><path d="M5.6 8.3L3.8 6.5Q3.1 5.7 3.8 5Q4.6 4.3 5.6 5.2Q6.6 4.3 7.4 5Q8.1 5.7 7.4 6.5Z" fill="#fff"/></svg><span style="margin-left:5.5px;font-size:11px;line-height:11px;color:#8a8a8e;position:relative;top:0.8px;-webkit-text-stroke:0.12px #8a8a8e;">5,748</span></div>
<div class="a" style="left:707px;top:465.81px;width:120px;height:8px;display:flex;justify-content:center;align-items:flex-start;"><svg style="position:static;flex:none" width="11" height="7" viewBox="0 0 11 7"><path d="M0.5 0.8L3.6 3.9L5.9 1.8L9.4 5.5" fill="none" stroke="#f02828" stroke-width="1.25"/><path d="M6.9 6.4H10.4V2.9Z" fill="#f02828"/></svg><span style="margin-left:3.5px;font-size:10.5px;line-height:10.5px;color:#f02828;position:relative;top:-1.5px;-webkit-text-stroke:0.3px #f02828;">-27%</span></div>
<div class="a" style="left:809.5px;top:465.81px;width:120px;height:8px;display:flex;justify-content:center;align-items:flex-start;"><svg style="position:static;flex:none" width="11" height="7" viewBox="0 0 11 7"><path d="M0.5 0.8L3.6 3.9L5.9 1.8L9.4 5.5" fill="none" stroke="#707070" stroke-width="1.25"/><path d="M6.9 6.4H10.4V2.9Z" fill="#707070"/></svg><span style="margin-left:3.5px;font-size:10.5px;line-height:10.5px;color:#8a94b8;position:relative;top:-1.5px;-webkit-text-stroke:0.3px #8a94b8;">-32%</span></div>
<div class="a" style="left:70px;top:504.51px;width:851px;height:1px;background:#eef0f5;"></div>
<svg style="left:81.5px;top:514.1800000000001px" width="62" height="62" viewBox="0 0 62 62">
<rect width="62" height="62" fill="#06130f"/>
<path d="M0 12L22 34L14 40H0Z" fill="#0b2e24"/>
<path d="M0 22L12 36L0 36Z" fill="#124436"/>
<path d="M28 0H62V16L52 10Q40 4 30 3Z" fill="#25685a"/>
<path d="M36 1L62 14V30L54 40H12L16 32Z" fill="#125238"/>
<path d="M56 18L62 22V40H50Z" fill="#0a2418"/>
<g transform="translate(39 9.5) rotate(40)"><rect x="-5" y="-5" width="10" height="10" rx="2.5" fill="#66706a"/><circle cx="-2" cy="-1.5" r="2" fill="#222"/><circle cx="2" cy="1.5" r="2" fill="#333"/></g>
<rect x="1.5" y="2" width="2" height="1" fill="#c88030"/>
</svg>
<div class="t " style="left:151.9px;top:536.50px;font-size:11.2px;line-height:11.2px;color:#222;transform:scaleX(0.964);transform-origin:0 0;-webkit-text-stroke:0.15px #222;">For iPhone 11 Pro Case Slim Leather Tex...</div>
<div class="a" style="left:389px;top:534.58px;width:120px;height:12px;display:flex;justify-content:center;align-items:flex-start;"><svg style="position:static;flex:none" width="11" height="11" viewBox="0 0 11 11"><path d="M0 1.2Q0 0 1.2 0H5.6L10.6 5Q11.2 5.6 10.6 6.2L6.2 10.6Q5.6 11.2 5 10.6L0 5.6Z" fill="#1b6fe0"/><circle cx="2.4" cy="2.4" r="0.75" fill="#fff"/><path d="M5.6 8.3L3.8 6.5Q3.1 5.7 3.8 5Q4.6 4.3 5.6 5.2Q6.6 4.3 7.4 5Q8.1 5.7 7.4 6.5Z" fill="#fff"/></svg><span style="margin-left:5.5px;font-size:11px;line-height:11px;color:#4a4ff0;position:relative;top:0.8px;-webkit-text-stroke:0.25px #4a4ff0;">115</span></div>
<div class="a" style="left:497px;top:534.58px;width:120px;height:12px;display:flex;justify-content:center;align-items:flex-start;"><svg style="position:static;flex:none" width="11" height="11" viewBox="0 0 11 11"><path d="M0 1.2Q0 0 1.2 0H5.6L10.6 5Q11.2 5.6 10.6 6.2L6.2 10.6Q5.6 11.2 5 10.6L0 5.6Z" fill="#5d6994"/><circle cx="2.4" cy="2.4" r="0.75" fill="#fff"/><path d="M5.6 8.3L3.8 6.5Q3.1 5.7 3.8 5Q4.6 4.3 5.6 5.2Q6.6 4.3 7.4 5Q8.1 5.7 7.4 6.5Z" fill="#fff"/></svg><span style="margin-left:5.5px;font-size:11px;line-height:11px;color:#8a8a8e;position:relative;top:0.8px;-webkit-text-stroke:0.12px #8a8a8e;">94</span></div>
<div class="a" style="left:604px;top:534.58px;width:120px;height:12px;display:flex;justify-content:center;align-items:flex-start;"><svg style="position:static;flex:none" width="11" height="11" viewBox="0 0 11 11"><path d="M0 1.2Q0 0 1.2 0H5.6L10.6 5Q11.2 5.6 10.6 6.2L6.2 10.6Q5.6 11.2 5 10.6L0 5.6Z" fill="#5d6994"/><circle cx="2.4" cy="2.4" r="0.75" fill="#fff"/><path d="M5.6 8.3L3.8 6.5Q3.1 5.7 3.8 5Q4.6 4.3 5.6 5.2Q6.6 4.3 7.4 5Q8.1 5.7 7.4 6.5Z" fill="#fff"/></svg><span style="margin-left:5.5px;font-size:11px;line-height:11px;color:#8a8a8e;position:relative;top:0.8px;-webkit-text-stroke:0.12px #8a8a8e;">341</span></div>
<div class="a" style="left:707px;top:534.58px;width:120px;height:12px;display:flex;justify-content:center;align-items:flex-start;"><svg style="position:static;flex:none" width="11" height="11" viewBox="0 0 11 11"><path d="M0 1.2Q0 0 1.2 0H5.6L10.6 5Q11.2 5.6 10.6 6.2L6.2 10.6Q5.6 11.2 5 10.6L0 5.6Z" fill="#5d6994"/><circle cx="2.4" cy="2.4" r="0.75" fill="#fff"/><path d="M5.6 8.3L3.8 6.5Q3.1 5.7 3.8 5Q4.6 4.3 5.6 5.2Q6.6 4.3 7.4 5Q8.1 5.7 7.4 6.5Z" fill="#fff"/></svg><span style="margin-left:5.5px;font-size:11px;line-height:11px;color:#8a8a8e;position:relative;top:0.8px;-webkit-text-stroke:0.12px #8a8a8e;">502</span></div>
<div class="a" style="left:809.5px;top:534.58px;width:120px;height:12px;display:flex;justify-content:center;align-items:flex-start;"><svg style="position:static;flex:none" width="11" height="11" viewBox="0 0 11 11"><path d="M0 1.2Q0 0 1.2 0H5.6L10.6 5Q11.2 5.6 10.6 6.2L6.2 10.6Q5.6 11.2 5 10.6L0 5.6Z" fill="#5d6994"/><circle cx="2.4" cy="2.4" r="0.75" fill="#fff"/><path d="M5.6 8.3L3.8 6.5Q3.1 5.7 3.8 5Q4.6 4.3 5.6 5.2Q6.6 4.3 7.4 5Q8.1 5.7 7.4 6.5Z" fill="#fff"/></svg><span style="margin-left:5.5px;font-size:11px;line-height:11px;color:#8a8a8e;position:relative;top:0.8px;-webkit-text-stroke:0.12px #8a8a8e;">502</span></div>
</body></html>
